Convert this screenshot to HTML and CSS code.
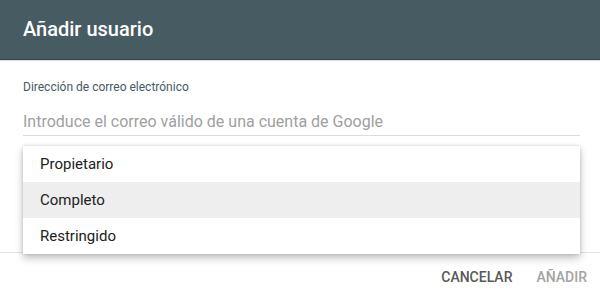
FILE: index.html
```html
<!DOCTYPE html>
<html lang="es">
<head>
<meta charset="utf-8">
<title>Añadir usuario</title>
<link rel="stylesheet" href="styles.css">
</head>
<body>
<div class="dialog">
  <header class="dialog-title">Añadir usuario</header>
  <main class="dialog-body">
    <label class="field-label">Dirección de correo electrónico</label>
    <div class="field-input">Introduce el correo válido de una cuenta de Google</div>
  </main>
  <footer class="dialog-actions">
    <button class="btn btn-cancel">CANCELAR</button>
    <button class="btn btn-add">AÑADIR</button>
  </footer>
  <ul class="menu">
    <li class="menu-item">Propietario</li>
    <li class="menu-item menu-item-active">Completo</li>
    <li class="menu-item">Restringido</li>
  </ul>
</div>
</body>
</html>
```

FILE: styles.css
```css
html, body {
  margin: 0;
  padding: 0;
  background: #ffffff;
}
body {
  font-family: Roboto, "Liberation Sans", Arial, sans-serif;
  width: 600px;
  height: 301px;
  overflow: hidden;
}
.dialog {
  position: relative;
  display: flex;
  flex-direction: column;
  height: 301px;
}
.dialog-title {
  height: 59px;
  line-height: 58px;
  padding-left: 23px;
  background: #475b63;
  border-bottom: 1px solid #34454c;
  box-shadow: 0 1px 1px rgba(0, 0, 0, 0.12);
  color: #ffffff;
  font-size: 20px;
  font-weight: 500;
}
.dialog-body {
  flex: 1;
  padding: 19px 20px 0 23px;
}
.field-label {
  display: block;
  font-size: 12px;
  line-height: 16px;
  color: #455a64;
}
.field-input {
  margin-top: 15px;
  font-size: 16px;
  line-height: 24px;
  color: #a0a0a0;
  padding-bottom: 1px;
  border-bottom: 1px solid #dcdcdc;
}
.dialog-actions {
  height: 48px;
  border-top: 1px solid #e3e3e3;
  display: flex;
  justify-content: flex-end;
  align-items: center;
  padding-right: 1px;
}
.btn {
  border: none;
  background: none;
  font-family: Roboto, "Liberation Sans", Arial, sans-serif;
  font-size: 14px;
  font-weight: 500;
  line-height: 36px;
  padding: 0 12px;
  margin: 0;
}
.btn-cancel {
  color: #595959;
}
.btn-add {
  color: #a3a3a3;
}
.menu {
  position: absolute;
  left: 23px;
  top: 146px;
  width: 557px;
  margin: 0;
  padding: 0;
  list-style: none;
  background: #ffffff;
  box-shadow: 0 4px 8px rgba(0, 0, 0, 0.25), 0 0 3px rgba(0, 0, 0, 0.15);
}
.menu-item {
  height: 36px;
  line-height: 36px;
  padding-left: 17px;
  font-size: 15px;
  color: #212121;
}
.menu-item-active {
  background: #eeeeee;
}
```
